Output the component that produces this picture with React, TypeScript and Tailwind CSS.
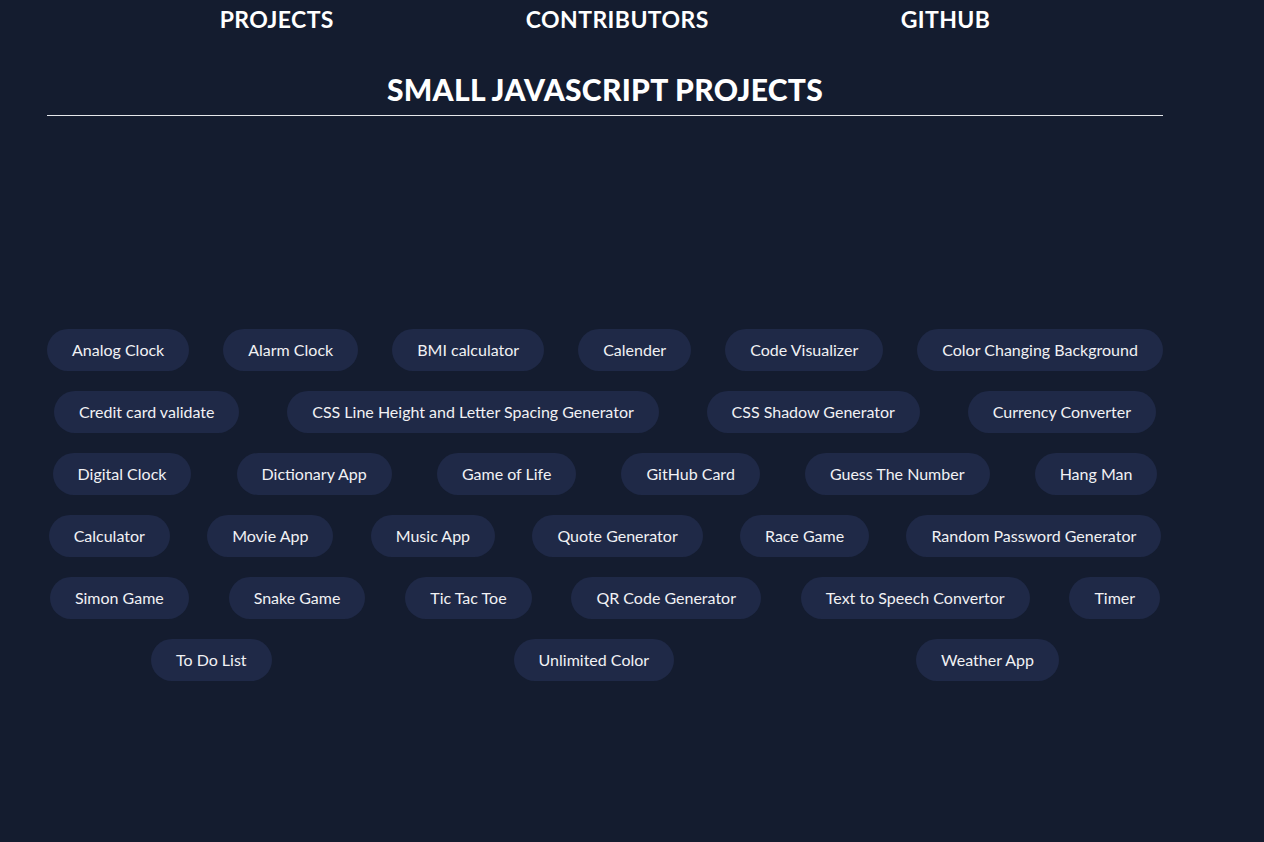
const rows: string[][] = [
  ["Analog Clock", "Alarm Clock", "BMI calculator", "Calender", "Code Visualizer", "Color Changing Background"],
  ["Credit card validate", "CSS Line Height and Letter Spacing Generator", "CSS Shadow Generator", "Currency Converter"],
  ["Digital Clock", "Dictionary App", "Game of Life", "GitHub Card", "Guess The Number", "Hang Man"],
  ["Calculator", "Movie App", "Music App", "Quote Generator", "Race Game", "Random Password Generator"],
  ["Simon Game", "Snake Game", "Tic Tac Toe", "QR Code Generator", "Text to Speech Convertor", "Timer"],
  ["To Do List", "Unlimited Color", "Weather App"],
];

export default function App() {
  return (
    <div className="min-h-screen w-full bg-[#141c2f] text-white" style={{ fontFamily: "Lato, 'Noto Sans', sans-serif" }}>
      <div className="ml-[30px] w-[1150px]">
        {/* nav */}
        <nav className="flex justify-center gap-[192px] pt-[4px]">
          <a className="text-[23px] font-bold tracking-[0.4px] leading-[30px]">PROJECTS</a>
          <a className="text-[23px] font-bold tracking-[0.4px] leading-[30px]">CONTRIBUTORS</a>
          <a className="text-[23px] font-bold tracking-[0.4px] leading-[30px]">GITHUB</a>
        </nav>

        <h1 className="mt-[37px] text-center text-[30px] font-black leading-[36px] tracking-[0.3px]">SMALL JAVASCRIPT PROJECTS</h1>
        <hr className="mx-[17px] mt-[8px] border-t border-[#e5e7eb]" />

        {/* projects */}
        <div className="mt-[213px] flex flex-col gap-5">
          {rows.map((row, i) => (
            <div key={i} className="flex justify-around">
              {row.map((name) => (
                <button
                  key={name}
                  className="h-[42px] rounded-full bg-[#1f2947] px-[25px] text-[16px] text-[#f1f1f4]"
                >
                  {name}
                </button>
              ))}
            </div>
          ))}
        </div>
      </div>
    </div>
  );
}
